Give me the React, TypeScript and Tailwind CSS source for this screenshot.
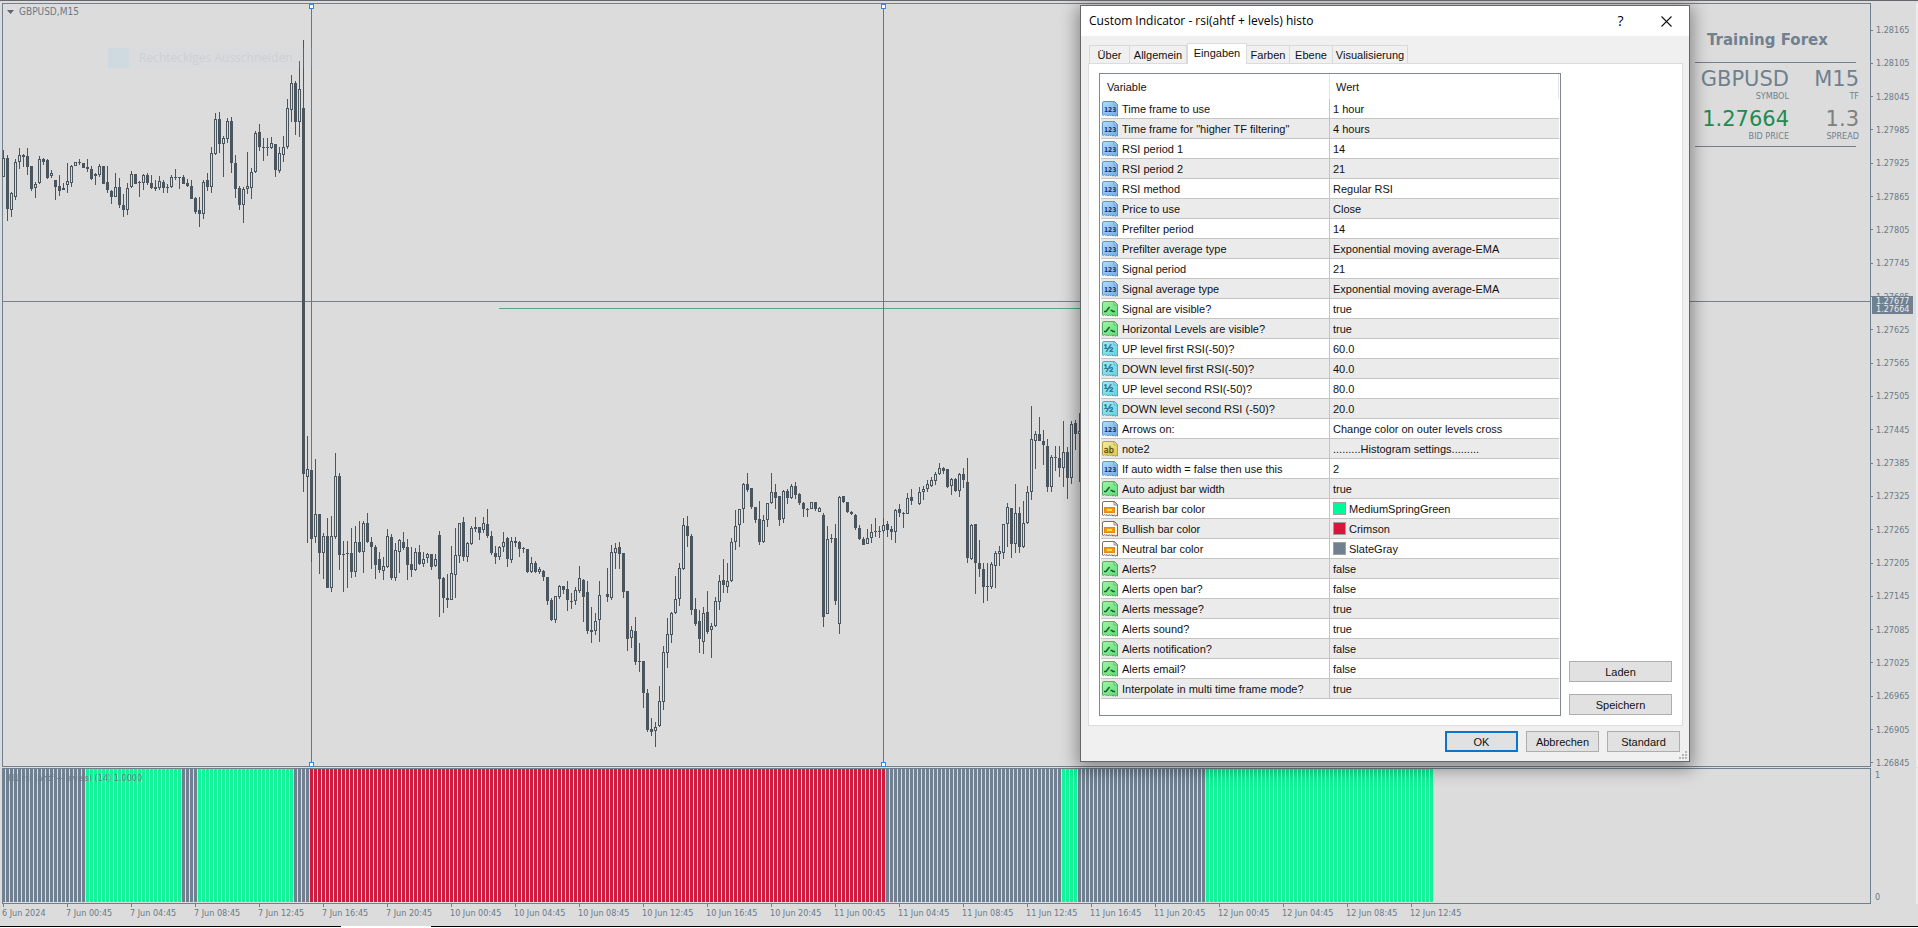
import { useState } from "react";

type Bar = [number, number, number, number, 0 | 1] | null;

/* Candles: high, body top, body bottom, low, filled. Units are thirds of a pixel below the segment's base. */
const SEGMENTS: { base: number; bars: Bar[] }[] = [
  {
    base: 0,
    bars: [
      [450, 474, 530, 530, 0], [465, 474, 626, 664, 1], [575, 580, 629, 650, 0], [478, 485, 590, 600, 0],
      [444, 465, 485, 506, 0], [462, 465, 470, 500, 1], [444, 468, 500, 525, 1], [498, 498, 567, 573, 1],
      [546, 552, 564, 594, 0], [468, 477, 550, 552, 0], [474, 477, 486, 495, 1], [478, 479, 534, 537, 1],
      [510, 520, 527, 533, 0], [540, 540, 560, 600, 1], [524, 558, 573, 587, 1], [549, 564, 569, 570, 1],
      [489, 544, 554, 580, 0], [495, 497, 550, 560, 0], [486, 486, 497, 498, 0], [477, 486, 489, 495, 1],
      [489, 489, 503, 504, 1], [477, 500, 508, 515, 1], [498, 507, 537, 540, 1], [519, 522, 527, 555, 1],
      [492, 498, 526, 530, 0], [498, 498, 551, 552, 1], [498, 546, 570, 578, 1], [570, 572, 590, 612, 1],
      [519, 562, 590, 590, 0], [534, 562, 614, 624, 1], [582, 615, 629, 650, 1], [549, 563, 629, 645, 0],
      [513, 523, 562, 564, 0], [522, 522, 551, 553, 1], [543, 545, 550, 590, 1], [521, 526, 550, 570, 0],
      [518, 526, 550, 556, 1], [526, 549, 563, 567, 1], [540, 560, 567, 572, 1], [528, 543, 563, 570, 0],
      [540, 546, 563, 580, 1], [552, 561, 564, 578, 1], [526, 532, 562, 564, 0], [507, 531, 534, 540, 1],
      [530, 532, 535, 566, 1], [525, 532, 551, 553, 1], [537, 549, 558, 561, 1], [540, 558, 597, 598, 1],
      [592, 593, 635, 641, 1], [591, 630, 641, 680, 1], [541, 545, 641, 656, 0], [519, 541, 560, 574, 1],
      [441, 460, 562, 580, 0], [339, 358, 461, 464, 0], [336, 357, 433, 460, 1], [408, 415, 433, 532, 0],
      [354, 364, 418, 428, 0], [351, 364, 490, 520, 1], [465, 490, 567, 594, 1], [558, 564, 614, 630, 1],
      [560, 566, 614, 668, 0], [456, 559, 566, 582, 0], [504, 516, 563, 596, 0], [393, 398, 517, 518, 0],
      [372, 396, 442, 454, 1], [414, 441, 443, 482, 1], [414, 441, 443, 468, 1], [411, 430, 443, 446, 0],
      [433, 433, 510, 530, 1], [440, 460, 512, 520, 0], [408, 442, 464, 485, 0], [297, 325, 442, 447, 0],
      [225, 250, 329, 366, 0], [243, 250, 365, 404, 1], [183, 268, 365, 412, 0], [120, 325, 1421, 1475, 1],
    ],
  },
  {
    base: 380,
    bars: [
      [168, 268, 290, 488, 0], [270, 270, 476, 545, 1], [236, 403, 472, 488, 0], [402, 403, 518, 582, 1],
      [460, 469, 518, 598, 0], [414, 468, 623, 624, 1], [408, 469, 623, 635, 0], [219, 289, 470, 476, 0],
      [279, 289, 524, 570, 1], [483, 521, 524, 635, 1], [483, 519, 523, 625, 1], [443, 519, 575, 594, 1],
      [437, 487, 575, 590, 0], [423, 487, 517, 519, 1], [423, 430, 517, 580, 0], [399, 430, 487, 488, 1],
      [472, 486, 500, 566, 1], [495, 501, 554, 598, 1], [516, 538, 570, 580, 1], [530, 559, 572, 600, 0],
      [447, 469, 560, 563, 0], [462, 470, 593, 600, 1], [489, 511, 593, 602, 0], [478, 481, 515, 578, 0],
      [456, 486, 503, 510, 1], [477, 501, 554, 600, 1], [501, 553, 569, 592, 1], [505, 517, 569, 572, 0],
      [496, 517, 551, 554, 1], [516, 536, 551, 560, 0], [519, 522, 535, 550, 0], [523, 523, 560, 570, 1],
      [523, 538, 559, 560, 0], [453, 465, 596, 711, 1], [591, 594, 653, 699, 1], [583, 655, 659, 684, 1],
      [498, 580, 659, 660, 0], [443, 526, 584, 654, 0], [430, 430, 529, 548, 0], [411, 427, 530, 544, 1],
      [487, 490, 532, 545, 0], [438, 445, 493, 494, 0], [411, 441, 446, 456, 1], [441, 441, 458, 479, 1],
      [410, 430, 450, 460, 0], [386, 432, 467, 474, 1], [453, 468, 519, 524, 1], [498, 519, 532, 551, 1],
      [499, 500, 530, 539, 0], [456, 486, 500, 515, 0], [472, 474, 538, 560, 1], [472, 484, 539, 548, 0],
      [471, 484, 488, 500, 1], [483, 486, 506, 530, 1], [501, 504, 508, 520, 1], [507, 508, 575, 578, 1],
      [532, 549, 575, 580, 0], [544, 549, 575, 580, 1], [562, 568, 577, 581, 0], [570, 573, 590, 602, 1],
      [591, 591, 664, 675, 1], [655, 661, 721, 722, 1], [648, 649, 719, 728, 0], [615, 619, 650, 656, 0],
      [618, 618, 629, 641, 1], [604, 628, 659, 692, 1], [640, 662, 665, 686, 1], [622, 630, 664, 675, 0],
      [558, 595, 634, 638, 0], [598, 600, 650, 725, 1], [602, 636, 752, 761, 1], [682, 750, 755, 790, 1],
      [700, 724, 752, 766, 0], [603, 646, 719, 785, 0], null,
    ],
  },
  {
    base: 440,
    bars: [
      [384, 462, 472, 485, 1], [316, 337, 473, 480, 0], [309, 324, 340, 388, 0], [306, 321, 341, 387, 1],
      [339, 339, 456, 475, 1], [453, 453, 596, 632, 1], [558, 571, 593, 624, 0], [531, 573, 665, 675, 1],
      [609, 663, 667, 695, 1], [663, 663, 758, 805, 1], [747, 758, 869, 875, 1], [835, 867, 875, 888, 1],
      [847, 860, 874, 920, 0], [739, 784, 859, 860, 0], [618, 637, 787, 809, 0], [534, 583, 638, 684, 0],
      [516, 519, 584, 610, 0], [408, 478, 520, 522, 0], [369, 385, 476, 499, 0], [235, 256, 386, 389, 0],
      [228, 258, 288, 320, 1], [282, 288, 511, 524, 1], [474, 508, 551, 557, 1], [510, 543, 596, 638, 1],
      [501, 519, 605, 641, 0], [453, 516, 577, 583, 1], [549, 559, 569, 654, 0], [472, 484, 559, 560, 0],
      [405, 424, 485, 510, 0], [357, 420, 436, 458, 1], [370, 424, 440, 460, 0], [295, 307, 423, 425, 0],
      [210, 259, 306, 330, 0], [208, 208, 254, 320, 0], [129, 132, 208, 250, 0], [99, 132, 150, 157, 1],
      [144, 144, 201, 208, 1], [202, 202, 240, 250, 1], [183, 238, 305, 314, 1], [226, 241, 305, 310, 0],
      [190, 190, 240, 260, 0], [99, 157, 190, 192, 0], [133, 157, 173, 206, 1], [168, 168, 239, 257, 1],
      [151, 152, 236, 248, 0], [147, 153, 173, 191, 1], [132, 139, 173, 177, 0], [126, 139, 164, 176, 1],
      [160, 162, 190, 194, 1], [186, 189, 208, 230, 1], [205, 206, 209, 230, 1], [186, 187, 206, 208, 0],
      [186, 187, 208, 214, 1], [201, 205, 215, 217, 0], [219, 225, 532, 560, 1], [258, 297, 521, 522, 0],
      [282, 294, 298, 308, 1], [252, 294, 482, 495, 1], [168, 172, 551, 581, 0], [168, 169, 186, 188, 1],
      [186, 187, 217, 218, 1], [213, 217, 223, 224, 1], [223, 225, 265, 271, 1], [256, 265, 298, 300, 1],
      [290, 297, 314, 315, 1], [267, 295, 311, 312, 0], [252, 277, 293, 309, 0], [234, 273, 276, 290, 1],
      [258, 273, 276, 294, 1], [234, 256, 274, 280, 0], [244, 253, 269, 291, 1], [258, 267, 275, 299, 1],
      [207, 211, 275, 308, 0], [193, 208, 218, 230, 1], [216, 218, 221, 263, 1], [159, 175, 221, 222, 0],
      [147, 171, 184, 195, 1], null, [141, 157, 191, 196, 0], [139, 148, 157, 180, 0],
      [120, 133, 148, 156, 0], [111, 121, 139, 142, 0], [97, 103, 124, 134, 0], [69, 85, 103, 105, 0],
      [81, 84, 92, 102, 1], [87, 87, 140, 144, 1], [114, 118, 139, 164, 0], [114, 117, 154, 156, 1],
      [99, 103, 154, 170, 0], [84, 102, 119, 145, 1], [54, 126, 355, 368, 1], [253, 256, 356, 360, 0],
      [252, 253, 368, 461, 1], [300, 369, 388, 412, 1], [370, 387, 440, 488, 1], [369, 438, 442, 483, 1],
      [365, 373, 440, 448, 0], [333, 340, 377, 444, 0], [318, 333, 341, 378, 0], [252, 253, 338, 357, 0],
      [190, 202, 251, 320, 0], [204, 205, 311, 353, 1], [132, 220, 311, 340, 0], [200, 220, 322, 338, 1],
      [183, 250, 322, 323, 0], [138, 157, 250, 252, 0], [-102, -2, 157, 180, 0], [-27, -17, 2, 86, 0],
      [-69, -19, 3, 3, 1], [-30, 3, 14, 75, 1], [-3, 18, 140, 155, 1], [45, 52, 140, 155, 0],
      [18, 51, 54, 92, 1], [18, 55, 83, 110, 1], [-56, 37, 83, 140, 0], [21, 37, 113, 176, 1],
      [-57, -47, 113, 132, 0], [-60, -51, -18, 30, 1], [-80, -27, -17, 125, 0],
    ],
  },
];

const candles = SEGMENTS.flatMap((s) =>
  s.bars.map((b) =>
    b
      ? {
          high: s.base + Math.round(b[0] / 3),
          top: s.base + Math.round(b[1] / 3),
          bottom: s.base + Math.round(b[2] / 3),
          low: s.base + Math.round(b[3] / 3),
          filled: b[4] === 1,
        }
      : null
  )
);

const SLATE = "#708090";
const SPRING = "#12f39a";
const CRIMSON = "#cf1b40";

/* Histogram runs: index of the first bar and its colour. */
const RUNS: [number, string][] = [
  [0, SLATE], [21, SPRING], [45, SLATE], [49, SPRING], [73, SLATE],
  [77, CRIMSON], [221, SLATE], [265, SPRING], [269, SLATE], [301, SPRING],
];
const LAST_BAR = 357;

const PRICES = Array.from({ length: 23 }, (_, i) => ((128165 - i * 60) / 100000).toFixed(5));

const TIMES = [
  "6 Jun 2024",
  ...["7 Jun", "10 Jun", "11 Jun", "12 Jun"].flatMap((d) =>
    ["00:45", "04:45", "08:45", "12:45", "16:45", "20:45"].map((t) => `${d} ${t}`)
  ),
].slice(0, 23);

type Kind = "int" | "bool" | "real" | "text" | "color";
const ROWS: [Kind, string, string, string?][] = [
  ["int", "Time frame to use", "1 hour"],
  ["int", 'Time frame for "higher TF filtering"', "4 hours"],
  ["int", "RSI period 1", "14"],
  ["int", "RSI period 2", "21"],
  ["int", "RSI method", "Regular RSI"],
  ["int", "Price to use", "Close"],
  ["int", "Prefilter period", "14"],
  ["int", "Prefilter average type", "Exponential moving average-EMA"],
  ["int", "Signal period", "21"],
  ["int", "Signal average type", "Exponential moving average-EMA"],
  ["bool", "Signal are visible?", "true"],
  ["bool", "Horizontal Levels are visible?", "true"],
  ["real", "UP level first RSI(-50)?", "60.0"],
  ["real", "DOWN level first RSI(-50)?", "40.0"],
  ["real", "UP level second RSI(-50)?", "80.0"],
  ["real", "DOWN level second RSI (-50)?", "20.0"],
  ["int", "Arrows on:", "Change color on outer levels cross"],
  ["text", "note2", ".........Histogram settings........."],
  ["int", "If auto width = false then use this", "2"],
  ["bool", "Auto adjust bar width", "true"],
  ["color", "Bearish bar color", "MediumSpringGreen", "bg-[#00fa9a]"],
  ["color", "Bullish bar color", "Crimson", "bg-[#dc143c]"],
  ["color", "Neutral bar color", "SlateGray", "bg-[#708090]"],
  ["bool", "Alerts?", "false"],
  ["bool", "Alerts open bar?", "false"],
  ["bool", "Alerts message?", "true"],
  ["bool", "Alerts sound?", "true"],
  ["bool", "Alerts notification?", "false"],
  ["bool", "Alerts email?", "false"],
  ["bool", "Interpolate in multi time frame mode?", "true"],
];

const SKIN: Record<Kind, { from: string; to: string; edge: string; ink: string }> = {
  int: { from: "#b4dcfb", to: "#6eabeb", edge: "#5e93c8", ink: "#10315f" },
  bool: { from: "#a4f3a4", to: "#5fdc78", edge: "#4fae5e", ink: "#14602a" },
  real: { from: "#a6eaf3", to: "#66cfe0", edge: "#4fa9bc", ink: "#17667c" },
  text: { from: "#f4ec9c", to: "#e0c94e", edge: "#b5a13c", ink: "#5f4d0c" },
  color: { from: "#ffffff", to: "#fdf4ea", edge: "#7c6a68", ink: "#c06a08" },
};

function TypeIcon({ kind }: { kind: Kind }) {
  const s = SKIN[kind];
  const id = `skin-${kind}`;
  return (
    <svg width="16" height="16" viewBox="0 0 16 16" className="block shrink-0" aria-hidden="true">
      <defs>
        <linearGradient id={id} x1="0" y1="0" x2="1" y2="1">
          <stop offset="0" stopColor={s.from} />
          <stop offset="1" stopColor={s.to} />
        </linearGradient>
      </defs>
      <path
        d="M.5 2Q.5 .5 2 .5H12.5L15.5 3.5V15.2L14.5 14 13.5 15.4 12.3 13.7 11 15.2 9.8 13.6 8.6 15 7.4 13.6 6.2 15 5 13.6 3.8 14.6 2.6 13.4 1.6 14.6 .5 14Z"
        fill={`url(#${id})`}
        stroke={s.edge}
      />
      <path d="M12 .5V4H15.5Z" fill="#fff" fillOpacity=".55" stroke={s.edge} strokeWidth=".8" />
      {kind === "int" && (
        <text x="1.9" y="11" fontSize="6.6" fontWeight="700" fontFamily="'DejaVu Sans Condensed','DejaVu Sans',sans-serif" fill={s.ink}>
          123
        </text>
      )}
      {kind === "real" && (
        <text x="2" y="11" fontSize="11" fontFamily="'Liberation Sans',sans-serif" fill={s.ink} stroke={s.ink} strokeWidth=".3">
          ½
        </text>
      )}
      {kind === "text" && (
        <text x="1.8" y="11.5" fontSize="9" fontFamily="'DejaVu Sans Condensed','DejaVu Sans',sans-serif" fill={s.ink} stroke={s.ink} strokeWidth=".3">
          ab
        </text>
      )}
      {kind === "bool" && <path d="M2 10.5H4L7.5 6M8.5 9.5H10L11 10.5H13" fill="none" stroke={s.ink} strokeWidth="1.5" />}
      {kind === "color" && (
        <>
          <rect x="2.5" y="6.5" width="10" height="5" fill="#f59a0c" stroke="#e08a10" />
          <rect x="5" y="8" width="5" height="2" fill="#ffe14a" />
        </>
      )}
    </svg>
  );
}

function VerticalLine({ x }: { x: number }) {
  return (
    <>
      <rect x={x} y="4" width="1" height="762" fill="#2f86d0" />
      <rect x={x - 1.5} y="4.5" width="4" height="4" fill="#fff" stroke="#2f8ae0" />
      <rect x={x - 1.5} y="762.5" width="4" height="4" fill="#fff" stroke="#2f8ae0" />
    </>
  );
}

function PriceChart() {
  return (
    <svg className="absolute inset-0 h-full w-full overflow-visible" shapeRendering="crispEdges" aria-label="GBPUSD candles">
      <g transform="translate(-3 -4)">
        <rect x="3" y="301" width="100%" height="1" fill="#75818c" />
        <rect x="499" y="308" width="590" height="1" fill="#54a97c" />
        <VerticalLine x={311} />
        <VerticalLine x={883} />
        {candles.map((c, i) => {
          if (!c) return null;
          const x = 3 + i * 4;
          const h = Math.max(1, c.bottom - c.top);
          return c.filled ? (
            <g key={i} fill="#4b555e">
              <rect x={x} y={c.high} width="1" height={Math.max(1, c.low - c.high)} />
              <rect x={x - 1} y={c.top} width="3" height={h} />
            </g>
          ) : (
            <g key={i}>
              <rect x={x} y={c.high} width="1" height={Math.max(1, c.low - c.high)} fill="#4b555e" />
              <rect x={x - 0.5} y={c.top + 0.5} width="2" height={Math.max(1, h - 1)} fill="#dcdcdc" stroke="#4b555e" />
            </g>
          );
        })}
      </g>
    </svg>
  );
}

function Histogram() {
  return (
    <svg className="absolute inset-0 h-full w-full" shapeRendering="crispEdges" aria-label="RSI histogram">
      {RUNS.map(([start, color], r) => {
        const end = r + 1 < RUNS.length ? RUNS[r + 1][0] : LAST_BAR + 1;
        return Array.from({ length: end - start }, (_, k) => (
          <rect key={start + k} x={(start + k) * 4 - 1} y="0" width="3" height="99%" fill={color} />
        ));
      })}
    </svg>
  );
}

const FIGURES = "grid grid-cols-[94px_1fr] text-right font-['DejaVu_Sans',sans-serif] text-[21px] leading-[24px]";
const CAPTIONS = "grid grid-cols-[94px_1fr] text-right text-[9px] leading-[11px]";

function InfoPanel() {
  return (
    <section className="relative ml-auto mr-[11px] w-[164px] pt-[26px] text-[#708090]">
      <h2 className="pl-[12px] font-['DejaVu_Sans',sans-serif] text-[15px] leading-[20px] font-bold whitespace-nowrap">Training Forex</h2>
      <div className="mt-[12px] mr-[3px] h-px bg-[#708090]" />
      <div className={`${FIGURES} mt-[4px]`}>
        <span>GBPUSD</span>
        <span>M15</span>
      </div>
      <div className={CAPTIONS}>
        <span>SYMBOL</span>
        <span>TF</span>
      </div>
      <div className={`${FIGURES} mt-[5px]`}>
        <span className="text-[#1f8b50]">1.27664</span>
        <span className="text-[#808080]">1.3</span>
      </div>
      <div className={CAPTIONS}>
        <span>BID PRICE</span>
        <span>SPREAD</span>
      </div>
      <div className="mt-[4px] mr-[3px] h-px bg-[#708090]" />
    </section>
  );
}

const TABS: [string, string][] = [
  ["Über", "w-[41px]"],
  ["Allgemein", "w-[57px]"],
  ["Eingaben", "w-[60px]"],
  ["Farben", "w-[43px]"],
  ["Ebene", "w-[43px]"],
  ["Visualisierung", "w-[75px]"],
];

const BUTTON = "h-[21px] border border-[#adadad] bg-[#e1e1e1] text-center leading-[18px]";

function IndicatorDialog() {
  const [tab, setTab] = useState("Eingaben");
  return (
    <div
      role="dialog"
      aria-labelledby="dialog-title"
      className="absolute top-[4px] left-[1080px] w-[610px] border border-[#66666a] bg-[#f0f0f0] font-['Liberation_Sans',sans-serif] text-[11px] leading-[16px] text-[#111] shadow-[0_4px_16px_3px_rgba(0,0,0,0.38)]"
    >
      <header className="flex h-[30px] items-center bg-white pl-[8px] font-['Open_Sans','Noto_Sans',sans-serif] text-black">
        <h1 id="dialog-title" className="flex-1 text-[12px]">Custom Indicator - rsi(ahtf + levels) histo</h1>
        <button type="button" aria-label="Hilfe" className="w-[45px] text-[14px]">?</button>
        <button type="button" aria-label="Schließen" className="flex w-[46px] justify-center">
          <svg width="11" height="11" viewBox="0 0 11 11" aria-hidden="true">
            <path d="M.5 .5L10.5 10.5M10.5 .5L.5 10.5" stroke="#111" strokeWidth="1.1" />
          </svg>
        </button>
      </header>

      <div role="tablist" className="flex h-[27px] items-end pl-[8px]">
        {TABS.map(([name, width]) => (
          <button
            key={name}
            type="button"
            role="tab"
            aria-selected={tab === name}
            onClick={() => setTab(name)}
            className={`${width} ${
              tab === name
                ? "relative -mb-px h-[21px] border border-b-0 border-[#dcdcdc] bg-white pb-[2px]"
                : "h-[18px] border-t border-r border-[#d9d9d9] bg-[#f0f0f0] first:border-l"
            } text-center whitespace-nowrap`}
          >
            {name}
          </button>
        ))}
      </div>

      <div role="tabpanel" className="mr-[6px] ml-[7px] flex gap-[8px] border border-[#dcdcdc] bg-white px-[10px] py-[9px]">
        <div className="flex-1 border border-[#828790] px-px pb-4">
          <table className="w-full table-fixed border-separate border-spacing-0 text-left">
            <thead>
              <tr className="h-[25px]">
                <th scope="col" className="w-[229px] border-r border-[#e5e5e5] py-0 pl-[6px] font-normal">Variable</th>
                <th scope="col" className="border-r border-[#e5e5e5] py-0 pl-[6px] font-normal">Wert</th>
              </tr>
            </thead>
            <tbody>
              {ROWS.map(([kind, name, value, swatch]) => (
                <tr key={name} className="h-[20px] even:bg-[#ebebeb]">
                  <td className="border-r border-b border-[#c4c4c4] p-0">
                    <div className="flex h-[19px] items-center gap-[4px] pl-px whitespace-nowrap">
                      <TypeIcon kind={kind} />
                      {name}
                    </div>
                  </td>
                  <td className="border-b border-[#c4c4c4] p-0">
                    <div className="flex h-[19px] items-center gap-[3px] pl-[3px] whitespace-nowrap">
                      {swatch && <span className={`size-[13px] border border-[#a0a0a0] ${swatch}`} />}
                      {value}
                    </div>
                  </td>
                </tr>
              ))}
            </tbody>
          </table>
        </div>
        <div className="flex w-[103px] flex-col justify-end gap-[12px] pb-px">
          <button type="button" className={BUTTON}>Laden</button>
          <button type="button" className={BUTTON}>Speichern</button>
        </div>
      </div>

      <footer className="flex justify-end gap-[8px] pt-[5px] pr-[9px] pb-[9px]">
        <button type="button" className="h-[21px] w-[73px] border-2 border-[#0f74c8] bg-[#e1e1e1] text-center leading-[16px]">OK</button>
        <button type="button" className={`${BUTTON} w-[73px]`}>Abbrechen</button>
        <button type="button" className={`${BUTTON} w-[73px]`}>Standard</button>
      </footer>
      <svg width="8" height="8" className="absolute right-[2px] bottom-[2px]" fill="#b8b8b8" aria-hidden="true">
        <path d="M6 0h2v2h-2zM3 3h2v2h-2zM6 3h2v2h-2zM0 6h2v2h-2zM3 6h2v2h-2zM6 6h2v2h-2z" />
      </svg>
    </div>
  );
}

export default function App() {
  return (
    <main className="relative flex h-screen flex-col overflow-hidden border-t border-[#66666c] bg-[#dcdcdc] pt-[2px] font-['DejaVu_Sans_Condensed','DejaVu_Sans',sans-serif] text-[9px] text-[#6b7a88]">
      <div className="flex min-h-0 flex-1 pl-[2px]">
        <section className="relative min-w-0 flex-1 border border-[#708090]">
          <PriceChart />
          <div className="relative flex">
            <div className="pl-[4px]">
              <div className="flex items-center gap-[5px] pt-px text-[10px] leading-[14px]">
                <svg width="7" height="4" aria-hidden="true">
                  <path d="M0 0H7L3.5 4Z" fill="#5b6670" />
                </svg>
                GBPUSD,M15
              </div>
              <div className="mt-[29px] ml-[101px] flex h-[20px] w-[212px] items-center gap-[10px] bg-[#c4dcec]/10 font-['Open_Sans','Noto_Sans',sans-serif] text-[12px] text-[#a0b0bc]/25">
                <span className="h-[20px] w-[21px] bg-[#b4d4ea]/25" />
                Rechteckiges Ausschneiden
              </div>
            </div>
            <InfoPanel />
          </div>
        </section>
        <aside className="relative flex w-[47px] flex-col justify-between border-r-2 border-[#ececec] pt-[23px]">
          {PRICES.map((p) => (
            <div key={p} className="flex h-[8px] items-center gap-[3px] leading-[8px]">
              <span className="h-px w-[2px] bg-[#708090]" />
              {p}
            </div>
          ))}
          <div className="absolute top-[293px] left-px w-[41px] bg-[#708090] py-px pl-[4px] leading-[8px] text-[#e8ecef]">
            <div>1.27677</div>
            <div>1.27664</div>
          </div>
        </aside>
      </div>

      <div className="mt-px flex h-[136px] pl-[2px]">
        <section className="relative min-w-0 flex-1 border border-[#708090]">
          <Histogram />
          <p className="relative pl-[5px] leading-[18px]">H1 rsi (ahtf + levels) (14) 1.0000</p>
        </section>
        <aside className="flex w-[47px] flex-col justify-between border-r-2 border-[#ececec] pt-[3px] pb-[2px] pl-[4px] leading-[9px]">
          <span>1</span>
          <span>0</span>
        </aside>
      </div>

      <div className="flex h-[22px] pl-[2px]">
        {TIMES.map((t) => (
          <div key={t} className="w-16 shrink-0 whitespace-nowrap">
            <div className="ml-px h-[3px] w-px bg-[#708090]" />
            <div className="leading-[12px]">{t}</div>
          </div>
        ))}
      </div>

      <div className="flex h-[2px]">
        <div className="w-[341px] border-t border-black bg-white" />
        <div className="w-[90px] bg-white" />
        <div className="flex-1 border-t border-black bg-white" />
      </div>

      <IndicatorDialog />
    </main>
  );
}
